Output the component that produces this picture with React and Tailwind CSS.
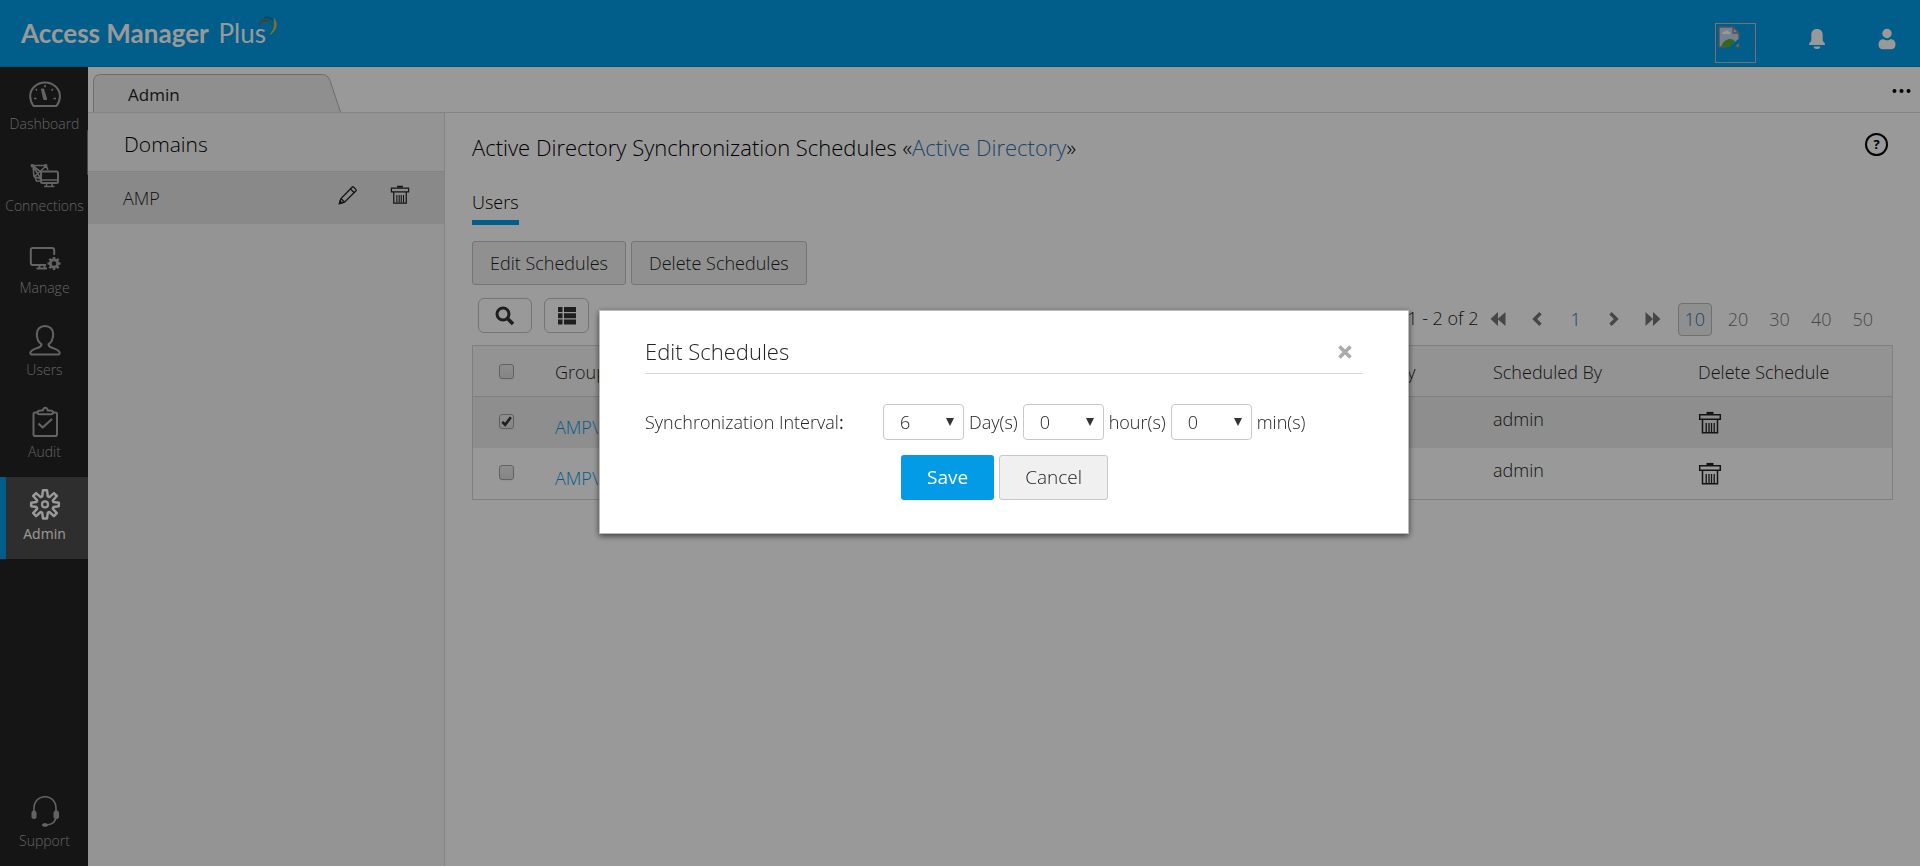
import { useState } from "react";

const pad = "flex h-[82px] w-full flex-col items-center border-l-[6px] pr-[5px] pt-[11px] text-[14px] leading-[20px]";

function Glyph({ children, size = "h-8 w-8", box = "0 0 32 32" }) {
  return (
    <svg
      viewBox={box}
      className={size}
      fill="none"
      stroke="currentColor"
      strokeWidth="2"
      strokeLinejoin="round"
      aria-hidden="true"
    >
      {children}
    </svg>
  );
}

const DashboardIcon = () => (
  <Glyph>
    <path d="M4.500 28h23c2.600-3.500 3.400-6.500 3.400-9.800A14.900 13.600 0 0 0 16 4.500 14.900 13.600 0 0 0 1.200 18.200c0 3.300.8 6.300 3.300 9.800Z" />
    <path d="m13 11.500 2.200 9.500h1.900L14.200 11.500Z" fill="currentColor" />
    <path d="M16 7v2.300M22.500 12.500l1.500-1.500M8 12.500l-1.300-1.300M5 20.500h2.500M24.500 20.500H27" strokeWidth="1.700" />
  </Glyph>
);

const ConnectionsIcon = () => (
  <Glyph>
    <path d="M3 5.500h14l2 4.500M4 6l8 13-7-2.500L4 6l8 6M17 6 5.500 16.500M6 17l1.500 4H12" strokeWidth="1.600" />
    <path d="M2 4.500h2.500V7H2zM15.500 4.500H18V7h-2.500z" fill="currentColor" strokeWidth=".6" />
    <rect x="12" y="11.500" width="17" height="11.500" rx="1.500" fill="#232323" />
    <path d="M12 20h17M17.500 23v3.500M23 23v3.500M15 26.600h10.500" strokeWidth="1.500" />
  </Glyph>
);

const ManageIcon = () => (
  <Glyph>
    <path d="M17 23H4c-1.400 0-2.200-.8-2.200-2.200V8.200C1.800 6.800 2.600 6 4 6h19c1.400 0 2.200.8 2.200 2.200V13" />
    <path d="M10.500 23v3.500M15.500 23.500v3M7.500 26.600H18" />
    <circle cx="25" cy="21.500" r="3.600" strokeWidth="2.600" />
    <path
      d="M25 15v2.500M25 25.500V28M18.500 21.500H21M29 21.500h2.500M20.400 16.900l1.800 1.800M27.800 24.300l1.800 1.800M29.600 16.900l-1.800 1.800M22.200 24.300l-1.800 1.800"
      strokeWidth="2.600"
    />
  </Glyph>
);

const UsersIcon = () => (
  <Glyph>
    <path d="M16 2c-5 0-8.200 3.400-8.200 8 0 5 1.700 8.200 4.700 10.400 0 1.800-1.200 2.500-3.500 3.300-3.300 1.200-7.300 2.300-7.700 5-.1 1 .4 1.700 1.500 1.700h26.400c1.100 0 1.600-.7 1.500-1.700-.4-2.700-4.400-3.800-7.700-5-2.300-.8-3.500-1.500-3.500-3.300 3-2.200 4.700-5.400 4.700-10.400 0-4.600-3.200-8-8.200-8Z" />
  </Glyph>
);

const AuditIcon = () => (
  <Glyph>
    <rect x="4.500" y="6.500" width="23.500" height="23.500" rx="1.800" />
    <path d="M8.500 6.500C8.500 5 9.500 4.500 12 4.500h2c.2-1.800 1-2.800 2.300-2.800s2.100 1 2.300 2.800h2c2.500 0 3.500.5 3.500 2s-.8 1.800-2 1.800H10.500c-1.200 0-2-.3-2-1.800Z" fill="#232323" />
    <path d="m9.500 17.500 4.200 4L23 13" strokeWidth="2.200" />
  </Glyph>
);

const AdminIcon = () => (
  <Glyph>
    <path
      d="M14 2.200h4l.8 6.200 1.600.7 4.500-4 2.900 2.900-4 4.500.7 1.600 5.300.6v3.600l-5.300.7-.7 1.700 4 4.500-2.900 2.900-4.500-4.100-1.600.7-.8 5.800h-4l-.8-5.800-1.600-.7-4.500 4.100L4.200 25.200l4-4.500-.7-1.700-5.300-.7v-3.600l5.300-.6.7-1.600L4.200 8l2.900-2.900 4.500 4 1.600-.7Z"
      strokeWidth="2.500"
    />
    <circle cx="16" cy="16.400" r="3" strokeWidth="2.200" />
  </Glyph>
);

const SupportIcon = () => (
  <Glyph>
    <path d="M5 17v-3.500C5 6.500 9.500 1.700 16 1.700S27 6.500 27 13.500V21c0 5.500-3.500 8.500-9.500 9" strokeWidth="1.600" />
    <rect x="3" y="16" width="4" height="7.500" rx="1.500" fill="currentColor" strokeWidth="1" />
    <rect x="25" y="16" width="4.500" height="7.500" rx="1.500" fill="currentColor" strokeWidth="1" />
    <rect x="13.500" y="28.800" width="5" height="2.400" rx="1.200" fill="currentColor" strokeWidth="1" />
  </Glyph>
);

function Trash({ className }) {
  return (
    <svg viewBox="0 0 24 24" className={className} fill="none" stroke="currentColor" strokeWidth="1.500" aria-hidden="true">
      <path d="M8.500 2h7" strokeWidth="2.200" />
      <path d="M1.700 3.700h20.600v4.600H1.700zM4.500 8.300h15v13.400h-15z" />
      <path d="M8.200 12v9M11 12v9M13.500 12v9M16.200 12v9" strokeWidth="1.300" />
    </svg>
  );
}

function Pencil() {
  return (
    <svg viewBox="0 0 20 20" className="h-5 w-5" fill="none" stroke="currentColor" strokeWidth="1.300" aria-hidden="true">
      <path d="m1.500 18.500 1.500-5L14 2.200c.6-.6 1-.6 1.600 0l2.200 2.200c.6.6.6 1 0 1.600L6.500 17.200Z" />
      <path d="m3 13.500 3.500 3.700M12.300 3.800l3.900 3.900" />
      <path d="m1.500 18.500.6-2.400 1.800 1.800Z" fill="currentColor" />
    </svg>
  );
}

function NavItem({ icon: Icon, label, active }) {
  return (
    <a
      href={"#" + label.toLowerCase()}
      className={
        active
          ? `${pad} border-[#039be5] bg-[#4d4d4d] font-normal text-white`
          : `${pad} border-transparent text-[#a6a6a6]`
      }
    >
      <Icon />
      <span className="mt-1">{label}</span>
    </a>
  );
}

function Check({ checked, onChange, label }) {
  return (
    <span className="relative block h-[15px] w-[15px]">
      <input
        type="checkbox"
        aria-label={label}
        checked={checked}
        onChange={onChange}
        className="block h-[15px] w-[15px] appearance-none rounded-[3px] border border-[#a3a3a3] bg-linear-to-b from-[#ededed] to-[#dedede] shadow-xs"
      />
      {checked && (
        <svg viewBox="0 0 15 15" className="pointer-events-none absolute inset-0 h-[15px] w-[15px]" fill="none" stroke="#333" strokeWidth="2.600" aria-hidden="true">
          <path d="m3.300 7.800 2.900 2.900L11.800 3.300" />
        </svg>
      )}
    </span>
  );
}

function Interval({ id, unit, value, max }) {
  const [v, setV] = useState(value);
  return (
    <>
      <span className="relative ml-[5px] first:ml-0">
        <select
          id={id}
          aria-label={unit}
          value={v}
          onChange={(e) => setV(Number(e.target.value))}
          className="block h-9 w-[81px] appearance-none rounded-[4px] border border-[#c8c8c8] bg-white pl-4 text-[18px] text-[#222]"
        >
          {Array.from({ length: max + 1 }, (_, i) => (
            <option key={i} value={i}>{i}</option>
          ))}
        </select>
        <svg viewBox="0 0 8 8" className="pointer-events-none absolute right-[10px] top-[14px] h-2 w-2" fill="#333" aria-hidden="true">
          <path d="M0 0h8L4 8Z" />
        </svg>
      </span>
      <span className="ml-[5px]">{unit}</span>
    </>
  );
}

const rows = [
  { name: "AMP\\Guests", by: "admin", every: "6 day(s)" },
  { name: "AMP\\Users", by: "admin", every: "6 day(s)" },
];

export default function App() {
  const [picked, setPicked] = useState([true, false]);
  const toggle = (i) => setPicked(picked.map((p, j) => (j === i ? !p : p)));

  return (
    <div className="flex min-h-screen flex-col bg-white font-['Open_Sans',sans-serif] text-[18px] font-light text-[#222]">
      <header className="flex h-[67px] items-start justify-between border-b border-[#0388c9] bg-[#039be5] text-white">
        <div className="flex pl-[21px] pt-4 font-['Lato',sans-serif] text-[26px] leading-[34px]">
          <span className="mr-1 font-bold">Access Manager&nbsp;</span>
          <span className="font-normal">Plus</span>
          <svg viewBox="0 0 20 20" className="-ml-2 h-5 w-5" fill="none" aria-hidden="true">
            <path d="M1 9C3 4 8 3 11.500 6 8 4.500 4 5 1 9Z" fill="#e5394b" stroke="#e5394b" strokeWidth=".8" />
            <path d="M3 4.500C7 2 12 3 14 9c-1-4-6-6-11-4.500Z" fill="#1b9e57" stroke="#1b9e57" strokeWidth=".8" />
            <path d="M6 1.600c4-1.200 8 0 10 3-3-2-6-3-10-3Z" fill="#0a6fb5" stroke="#0a6fb5" strokeWidth=".8" />
            <path d="M16 2.500c4 5 2.500 12-4 16 4.500-4.500 5.500-10 4-16Z" fill="#e8c02c" stroke="#e8c02c" strokeWidth=".8" />
          </svg>
        </div>
        <div className="flex items-start pr-6 pt-[23px]">
          <div className="h-10 w-[41px] border border-[#c0c0c0] p-[2px]" role="img" aria-label="Profile picture">
            <svg viewBox="0 0 22 22" className="h-[22px] w-[22px]" aria-hidden="true">
              <path d="M1 1h14l6 6v14H1Z" fill="#c4d5f4" />
              <path d="M3 21c2-6 6-8 9-8 4 0 6 3 7 8Z" fill="#56ad31" />
              <path d="M4 8c0-2 2-2 2.500-2C7 4 10.500 4 11 6c2 0 2 2 1 2Z" fill="#fff" />
              <path d="M1 21V1h14l6 6v5M1 21h8M15 1v6h6M19 21h2v-3" fill="none" stroke="#8a8a8a" strokeWidth="1.500" />
              <path d="M10 22 21.500 12v5L15 22Z" fill="#039be5" />
            </svg>
          </div>
          <button type="button" aria-label="Notifications" className="ml-[52px] mt-[5px]">
            <svg viewBox="0 0 18 22" className="h-[22px] w-[18px]" fill="currentColor" aria-hidden="true">
              <path d="M3.300 7.500C3.300 3 5.500 1 9 1s5.700 2 5.700 6.500v5c0 1.200 2.300 2 2.300 3.500 0 .7-.4 1-1.100 1H2.100C1.400 17 1 16.700 1 16c0-1.500 2.300-2.300 2.300-3.500ZM5.500 18.500h7c-.3 1.700-1.500 2.500-3.500 2.500s-3.200-.8-3.500-2.500Z" />
            </svg>
          </button>
          <button type="button" aria-label="Account" className="ml-[52px] mt-[5px]">
            <svg viewBox="0 0 18 22" className="h-[22px] w-[18px]" fill="currentColor" aria-hidden="true">
              <circle cx="9" cy="5.500" r="4.700" />
              <path d="M5 11c1.500 1 2.500 1.200 4 1.200s2.500-.2 4-1.200c3 .5 4.500 2.500 4.500 5.500 0 3.200-1.500 4.700-4.700 4.700H5.200C2 21.200.5 19.700.5 16.500.5 13.500 2 11.500 5 11Z" />
            </svg>
          </button>
        </div>
      </header>

      <div className="flex grow">
        <nav className="relative flex w-[88px] shrink-0 flex-col bg-[#232323]">
          <NavItem icon={DashboardIcon} label="Dashboard" />
          <NavItem icon={ConnectionsIcon} label="Connections" />
          <NavItem icon={ManageIcon} label="Manage" />
          <NavItem icon={UsersIcon} label="Users" />
          <NavItem icon={AuditIcon} label="Audit" />
          <NavItem icon={AdminIcon} label="Admin" active />
          <div className="mt-auto">
            <NavItem icon={SupportIcon} label="Support" />
          </div>
          <span className="absolute right-0 top-[63px] h-[45px] w-px rounded bg-[#777]" />
        </nav>

        <div className="flex min-w-0 grow flex-col">
          <div className="flex h-[46px] items-end justify-between border-b border-[#dadada] pl-[5px]">
            <div className="relative h-[38px] w-[248px]">
              <svg viewBox="0 0 248 38" className="absolute inset-0 h-full w-full" aria-hidden="true">
                <path d="M.5 38V7.500q0-7 7-7h222q5 0 7.500 6L247.500 38" fill="#efefef" stroke="#b4b4b4" />
              </svg>
              <span className="relative block pl-[35px] pt-[9px] text-[17px] font-normal leading-6">Admin</span>
            </div>
            <button type="button" aria-label="More" className="mb-[17px] mr-[9px]">
              <svg viewBox="0 0 19 8" className="h-2 w-[19px]" fill="#000" aria-hidden="true">
                <circle cx="2.500" cy="4" r="2" />
                <circle cx="9.500" cy="4" r="2" />
                <circle cx="16.500" cy="4" r="2" />
              </svg>
            </button>
          </div>

          <div className="flex grow">
            <aside className="w-[357px] shrink-0 border-r border-[#dadada] bg-[#f7f7f7]">
              <h2 className="h-[58px] pl-[36px] pt-[17px] text-[21px] leading-7 text-black">Domains</h2>
              <div className="flex h-[53px] items-center border-t border-[#dadada] bg-[#e5e5e5] pl-[35px]">
                <span className="grow">AMP</span>
                <button type="button" aria-label="Edit" className="mr-8 pb-[6px]"><Pencil /></button>
                <button type="button" aria-label="Delete" className="mr-[34px] pb-[6px]"><Trash className="h-5 w-5" /></button>
              </div>
            </aside>

            <main className="min-w-0 grow pl-[27px] pr-[27px]">
              <div className="flex items-start justify-between pt-5">
                <h1 className="text-[22px] leading-7 text-black">
                  Active Directory Synchronization Schedules «
                  <a href="#ad" className="text-[#3572b0]">Active Directory</a>»
                </h1>
                <button type="button" aria-label="Help" className="mr-[5px] flex h-[23px] w-[23px] items-center justify-center rounded-full border-2 border-black text-[13px] font-bold leading-none text-black">
                  ?
                </button>
              </div>
              <div className="mt-7 flex">
                <a href="#users" className="border-b-[5px] border-[#039be5] pb-[5px] leading-[26px] text-black">Users</a>
              </div>

              <div className="mt-4 flex gap-[5px]">
                <button type="button" className="h-11 rounded-[3px] border border-[#c4c4c4] bg-[#f0f0f0] px-[17px]">Edit Schedules</button>
                <button type="button" className="h-11 rounded-[3px] border border-[#c4c4c4] bg-[#f0f0f0] px-[17px]">Delete Schedules</button>
              </div>

              <div className="mt-[13px] flex h-[47px] items-start">
                <button type="button" aria-label="Search" className="ml-[6px] flex h-[35px] w-[54px] items-center justify-center rounded-[6px] border border-[#c4c4c4]">
                  <svg viewBox="0 0 20 20" className="h-5 w-5" fill="none" stroke="#333" strokeWidth="3" aria-hidden="true">
                    <circle cx="8" cy="8" r="6" />
                    <path d="m12.500 12.500 5.500 5.500" strokeWidth="3.600" />
                  </svg>
                </button>
                <button type="button" aria-label="Columns" className="ml-3 flex h-[35px] w-[45px] items-center justify-center rounded-[6px] border border-[#c4c4c4]">
                  <svg viewBox="0 0 20 18" className="h-[18px] w-5" fill="#333" aria-hidden="true">
                    <path d="M1 0h4.500v5H1zM7 0h12v5H7zM1 6.300h4.500v5H1zM7 6.300h12v5H7zM1 12.600h4.500v5H1zM7 12.600h12v5H7z" />
                  </svg>
                </button>
                <div className="ml-auto flex h-[42px] items-center pr-5">
                  <span className="whitespace-nowrap pb-[2px]">1 - 2 of 2</span>
                  <button type="button" aria-label="First page" className="ml-3">
                    <svg viewBox="0 0 16 14" className="h-[14px] w-4" fill="#777" aria-hidden="true"><path d="M8 0v14L.5 7ZM15.500 0v14L7.500 7Z" /></svg>
                  </button>
                  <button type="button" aria-label="Previous page" className="ml-[26px]">
                    <svg viewBox="0 0 10 14" className="h-[14px] w-[10px]" fill="none" stroke="#777" strokeWidth="3.400" aria-hidden="true"><path d="M8.500 1.200 2.700 7l5.800 5.800" /></svg>
                  </button>
                  <a href="#p1" className="ml-[28px] text-[#3572b0]">1</a>
                  <button type="button" aria-label="Next page" className="ml-[28px]">
                    <svg viewBox="0 0 10 14" className="h-[14px] w-[10px]" fill="none" stroke="#777" strokeWidth="3.400" aria-hidden="true"><path d="M1.500 1.200 7.300 7l-5.800 5.800" /></svg>
                  </button>
                  <button type="button" aria-label="Last page" className="ml-[26px]">
                    <svg viewBox="0 0 16 14" className="h-[14px] w-4" fill="#777" aria-hidden="true"><path d="M.5 0v14L8 7ZM8 0v14l7.500-7Z" /></svg>
                  </button>
                  <a href="#s10" className="ml-[17px] mr-4 flex h-[33px] w-[34px] items-center justify-center rounded-[4px] border border-[#bbb] bg-[#eee] text-[#3572b0]">10</a>
                  <div className="flex gap-[21px] text-[#777]">
                    <a href="#s20">20</a>
                    <a href="#s30">30</a>
                    <a href="#s40">40</a>
                    <a href="#s50">50</a>
                  </div>
                </div>
              </div>

              <table className="w-full table-fixed border-separate border-spacing-0 border border-[#d6d6d6] text-left">
                <colgroup>
                  <col className="w-[82px]" />
                  <col />
                  <col className="w-[162px]" />
                  <col className="w-[205px]" />
                  <col className="w-[194px]" />
                </colgroup>
                <thead>
                  <tr className="h-[51px] bg-[#f6f6f6]">
                    <th className="border-b border-[#d6d6d6] pl-[26px]"><Check checked={false} onChange={() => setPicked([true, true])} label="Select all" /></th>
                    <th className="border-b border-[#d6d6d6] pt-[2px] font-light">Group Name</th>
                    <th className="border-b border-[#d6d6d6] pt-[2px] font-light">Frequency</th>
                    <th className="border-b border-[#d6d6d6] pt-[2px] font-light">Scheduled By</th>
                    <th className="border-b border-[#d6d6d6] pt-[2px] font-light">Delete Schedule</th>
                  </tr>
                </thead>
                <tbody>
                  {rows.map((r, i) => (
                    <tr key={r.name} className="h-[51px] align-top odd:bg-[#ededed]">
                      <td className="pl-[26px] pt-[17px]"><Check checked={picked[i]} onChange={() => toggle(i)} label={r.name} /></td>
                      <td className="pt-[18px] leading-6"><a href="#group" className="text-[#039be5]">{r.name}</a></td>
                      <td className="pt-[10px] leading-6">{r.every}</td>
                      <td className="pt-[10px] leading-6">{r.by}</td>
                      <td className="pt-[14px]"><button type="button" aria-label={"Delete " + r.name} className="block"><Trash className="h-6 w-6" /></button></td>
                    </tr>
                  ))}
                </tbody>
              </table>
            </main>
          </div>
        </div>
      </div>

      <div className="fixed inset-0 flex items-start justify-center bg-black/40 pl-[88px] pt-[310px]">
        <section role="dialog" aria-label="Edit Schedules" className="w-[810px] border border-[#bbb] bg-white px-[45px] pb-[33px] pt-[26px] shadow-[0_2px_6px_rgba(0,0,0,0.6)]">
          <div className="flex items-center justify-between border-b border-[#d8d8d8] pb-[7px]">
            <h2 className="text-[22px] leading-[29px]">Edit Schedules</h2>
            <button type="button" aria-label="Close" className="mr-[11px]">
              <svg viewBox="0 0 14 14" className="h-[14px] w-[14px]" fill="none" stroke="#aaa" strokeWidth="3.600" aria-hidden="true">
                <path d="m1.500 1.500 11 11M12.500 1.500l-11 11" />
              </svg>
            </button>
          </div>
          <div className="mt-[30px] flex items-center">
            <label htmlFor="days" className="w-[238px]">Synchronization Interval<b>:</b></label>
            <div className="flex items-center">
              <Interval id="days" unit="Day(s)" value={6} max={31} />
              <Interval id="hours" unit="hour(s)" value={0} max={23} />
              <Interval id="mins" unit="min(s)" value={0} max={59} />
            </div>
          </div>
          <div className="mt-[15px] flex gap-[5px] pl-64">
            <button type="button" className="h-[45px] rounded-[3px] bg-[#039be5] px-[26px] text-[19px] font-normal text-white">Save</button>
            <button type="button" className="h-[45px] rounded-[3px] border border-[#c8c8c8] bg-[#f0f0f0] px-[25px] text-[19px]">Cancel</button>
          </div>
        </section>
      </div>
    </div>
  );
}
